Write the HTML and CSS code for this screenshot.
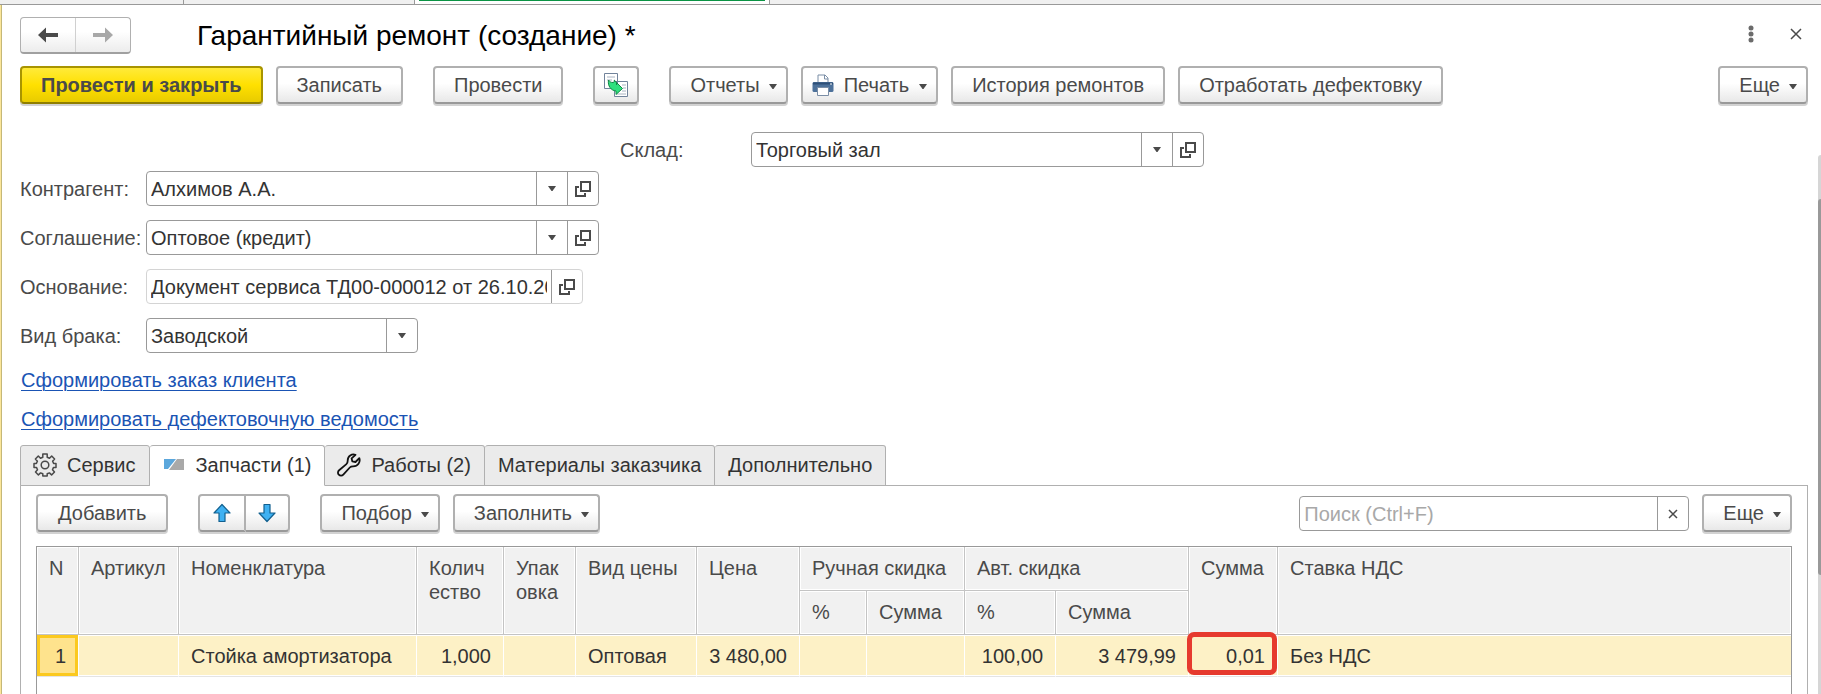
FILE: index.html
```html
<!DOCTYPE html>
<html lang="ru">
<head>
<meta charset="utf-8">
<title>Гарантийный ремонт (создание) *</title>
<link rel="stylesheet" href="styles.css">
</head>
<body>
<svg class="defs" aria-hidden="true">
  <symbol id="caret" viewBox="0 0 8 5"><path d="M0 0h8L4.500 5h-1z" fill="#4a4a4a"/></symbol>
  <symbol id="open" viewBox="0 0 16 16"><path d="M6 1h9v9H6zM4 6H1v9h9v-3" fill="none" stroke="#4a4a4a" stroke-width="2"/></symbol>
  <symbol id="arrow" viewBox="0 0 22 16"><path d="M1 8 9 0.500V6H21v4H9v5.500z"/></symbol>
  <symbol id="up" viewBox="0 0 18 20"><path d="M9 1.500 17 10H12v8.500H6V10H1z" fill="#3fb1f2" stroke="#12608f" stroke-width="1.200" stroke-linejoin="round"/></symbol>
</svg>
<div class="window-tabs"><span class="wtab first"></span><span class="wtab second"></span><span class="wtab current"></span></div>
<main class="form">
  <header class="title-row">
    <div class="nav">
      <button type="button" aria-label="Назад"><svg class="nav-arrow"><use href="#arrow"/></svg></button>
      <button type="button" aria-label="Вперед"><svg class="nav-arrow forward"><use href="#arrow"/></svg></button>
    </div>
    <h1>Гарантийный ремонт (создание) *</h1>
    <button type="button" class="plain" aria-label="Меню"><svg width="6" height="18"><g fill="#6b6b6b"><circle cx="3" cy="3" r="2.500"/><circle cx="3" cy="9" r="2.500"/><circle cx="3" cy="15" r="2.500"/></g></svg></button>
    <button type="button" class="plain" aria-label="Закрыть"><svg width="12" height="12"><path d="M1 1l10 10M11 1 1 11" stroke="#4a4a4a" stroke-width="1.500"/></svg></button>
  </header>

  <div class="commands">
    <button type="button" class="btn primary">Провести и закрыть</button>
    <button type="button" class="btn">Записать</button>
    <button type="button" class="btn spaced">Провести</button>
    <button type="button" class="btn spaced icon-only" aria-label="Создать на основании">
      <svg width="26" height="26" viewBox="0 0 26 26"><path d="M1.500 1.500h13v15h-13zM11.500 9.500h13v15h-13z" fill="#fff" stroke="#71839b"/><path d="M4 5h8M4 8h5M19 13h4M20 16h3M19 19h4M14 22h9" stroke="#a9b4c2"/><path d="M5.500 8c1.500 2 2.500 2.500 4.500 2.500 2-.5 1.500-2 1-2.500 2 1 3 3 2.500 5V10.500L19.500 16.500l-6.500 6v-3.500C8 18.500 4.500 14 5.500 8z" fill="#2fe07e" stroke="#118746" stroke-linejoin="round"/></svg>
    </button>
    <button type="button" class="btn spaced menu">Отчеты<svg class="caret"><use href="#caret"/></svg></button>
    <button type="button" class="btn menu print"><svg width="22" height="22" viewBox="0 0 22 22"><path d="M6 9V1h7l3 3v5" fill="#fff" stroke="#7b8ea6"/><path d="M12.500 1v4H16" fill="none" stroke="#7b8ea6"/><rect x="0.500" y="8" width="21" height="10" rx="1.500" fill="#4d719a"/><path d="M1 9.500h20" stroke="#2f5078" stroke-width="2"/><path d="M18 10h2" stroke="#fff"/><path d="M5.500 13.500h11v8h-11z" fill="#fff" stroke="#7b8ea6"/></svg>Печать<svg class="caret"><use href="#caret"/></svg></button>
    <button type="button" class="btn">История ремонтов</button>
    <button type="button" class="btn">Отработать дефектовку</button>
    <button type="button" class="btn menu push">Еще<svg class="caret"><use href="#caret"/></svg></button>
  </div>

  <div class="fields">
    <div class="column left">
      <div class="field"><label for="partner">Контрагент:</label><div class="combo wide"><input id="partner" value="Алхимов А.А."><button type="button" aria-label="Выбрать"><svg class="drop"><use href="#caret"/></svg></button><button type="button" aria-label="Открыть"><svg class="open"><use href="#open"/></svg></button></div></div>
      <div class="field"><label for="terms">Соглашение:</label><div class="combo wide"><input id="terms" value="Оптовое (кредит)"><button type="button" aria-label="Выбрать"><svg class="drop"><use href="#caret"/></svg></button><button type="button" aria-label="Открыть"><svg class="open"><use href="#open"/></svg></button></div></div>
      <div class="field"><label for="basis">Основание:</label><div class="combo readonly"><input id="basis" readonly value="Документ сервиса ТД00-000012 от 26.10.2020"><button type="button" aria-label="Открыть"><svg class="open"><use href="#open"/></svg></button></div></div>
      <div class="field"><label for="defect">Вид брака:</label><div class="combo short"><input id="defect" value="Заводской"><button type="button" aria-label="Выбрать"><svg class="drop"><use href="#caret"/></svg></button></div></div>
    </div>
    <div class="column right">
      <div class="field"><label for="store">Склад:</label><div class="combo wide"><input id="store" value="Торговый зал"><button type="button" aria-label="Выбрать"><svg class="drop"><use href="#caret"/></svg></button><button type="button" aria-label="Открыть"><svg class="open"><use href="#open"/></svg></button></div></div>
    </div>
  </div>

  <nav class="links">
    <a href="#order">Сформировать заказ клиента</a>
    <a href="#defects">Сформировать дефектовочную ведомость</a>
  </nav>

  <div class="tabs" role="tablist">
    <button type="button" role="tab" class="tab with-icon"><svg width="24" height="24" viewBox="0 0 24 24" fill="none" stroke="#4a4a4a" stroke-width="1.500" stroke-linejoin="round"><circle cx="12" cy="12" r="3.800"/><path d="M9.800 1h4.400v3.200l2.300 1L18.700 3l2.900 3-2 2.300 1 2.100H23v4.200h-2.600l-.9 2.200 2 2.100-2.900 3-2.200-2-2.200.9V23H9.800v-2.200l-2.200-.9-2.200 2-2.900-3 2-2.100-.9-2.200H1v-4.200h2.400l1-2.100-2-2.300 2.900-3 2.200 2.200 2.300-1z"/></svg>Сервис</button>
    <button type="button" role="tab" class="tab with-icon selected" aria-selected="true"><svg width="24" height="24" viewBox="0 0 24 24"><path d="M2 6h12L6 16H2z" fill="#5ba7dc"/><path d="M15 6h7v11H7z" fill="#a9a9a9"/></svg>Запчасти (1)</button>
    <button type="button" role="tab" class="tab with-icon"><svg width="24" height="24" viewBox="0 0 24 24" fill="none" stroke="#111" stroke-width="1.800" stroke-linejoin="round"><path d="M18.500 1.800c-3.500-1.300-8 1-7.800 6 0 1.600-.2 2.400-1.300 3.300l-7.300 6.200c-1.500 1.300-1.400 3.200-.3 4.400 1.200 1.300 3.300 1.300 4.500 0l6.500-7.200c.9-1 1.700-1.200 3.200-1.200 4.900.1 7.700-4.300 6.300-8.200L18.500 9l-3.200-.6-.7-3z"/></svg>Работы (2)</button>
    <button type="button" role="tab" class="tab">Материалы заказчика</button>
    <button type="button" role="tab" class="tab">Дополнительно</button>
  </div>

  <section class="panel">
    <div class="commands inner">
      <button type="button" class="btn">Добавить</button>
      <div class="pair spaced">
        <button type="button" class="btn" aria-label="Вверх"><svg width="18" height="20"><use href="#up"/></svg></button>
        <button type="button" class="btn" aria-label="Вниз"><svg class="flip" width="18" height="20"><use href="#up"/></svg></button>
      </div>
      <button type="button" class="btn spaced menu">Подбор<svg class="caret"><use href="#caret"/></svg></button>
      <button type="button" class="btn menu">Заполнить<svg class="caret"><use href="#caret"/></svg></button>
      <div class="combo search push"><input aria-label="Поиск" placeholder="Поиск (Ctrl+F)"><button type="button" aria-label="Очистить"><svg width="10" height="10"><path d="M1 1l8 8M9 1 1 9" stroke="#4a4a4a" stroke-width="1.500"/></svg></button></div>
      <button type="button" class="btn menu">Еще<svg class="caret"><use href="#caret"/></svg></button>
    </div>
    <div class="grid">
      <table>
        <colgroup><col class="c-n"><col class="c-art"><col class="c-name"><col class="c-qty"><col class="c-pack"><col class="c-kind"><col class="c-price"><col class="c-mp"><col class="c-ms"><col class="c-ap"><col class="c-as"><col class="c-sum"><col></colgroup>
        <thead>
          <tr><th rowspan="2">N</th><th rowspan="2">Артикул</th><th rowspan="2">Номенклатура</th><th rowspan="2">Колич<br>ество</th><th rowspan="2">Упак<br>овка</th><th rowspan="2">Вид цены</th><th rowspan="2">Цена</th><th colspan="2">Ручная скидка</th><th colspan="2">Авт. скидка</th><th rowspan="2">Сумма</th><th rowspan="2">Ставка НДС</th></tr>
          <tr><th>%</th><th>Сумма</th><th>%</th><th>Сумма</th></tr>
        </thead>
        <tbody>
          <tr><td class="num active">1</td><td></td><td>Стойка амортизатора</td><td class="num">1,000</td><td></td><td>Оптовая</td><td class="num">3 480,00</td><td></td><td></td><td class="num">100,00</td><td class="num">3 479,99</td><td class="num marked">0,01</td><td>Без НДС</td></tr>
        </tbody>
      </table>
    </div>
  </section>
</main>
<div class="scrollbar"><div class="thumb"></div></div>
</body>
</html>
```
FILE: styles.css
```css
* { box-sizing: border-box; }
body {
  margin: 0;
  height: 100vh;
  overflow: hidden;
  display: flex;
  flex-direction: column;
  background: #fff;
  color: #333;
  font: 20px/24px "Liberation Sans", Arial, sans-serif;
}
button, input { font: inherit; color: inherit; }
button { margin: 0; padding: 0; cursor: pointer; }
svg { display: block; flex: none; }
.defs { position: absolute; width: 0; height: 0; }

.window-tabs { display: flex; flex: none; height: 5px; background: #f0f0f0; border-bottom: 1px solid #999; }
.wtab { border-right: 1px solid #999; }
.first { width: 184px; }
.second { width: 231px; }
.current { width: 355px; padding: 0 4px; background: #fff; }
.current::before { content: ""; display: block; height: 1px; background: #0b9444; }

.form {
  flex: 1;
  min-height: 0;
  display: flex;
  flex-direction: column;
  padding: 12px 13px 0 19px;
  border-left: 1px solid #fbe69a;
  box-shadow: inset 1px 0 #c5b878;
}

.title-row { display: flex; align-items: center; flex: none; height: 37px; }
.nav { display: flex; height: 37px; border: 1px solid #b0b0b0; border-bottom: 2px solid #a0a0a0; border-radius: 4px; background: linear-gradient(#fff 40%, #ececec); }
.nav button { width: 54px; border: 0; background: none; display: grid; place-items: center; }
.nav button + button { width: 55px; border-left: 1px solid #d0d0d0; }
.nav-arrow { width: 22px; height: 16px; fill: #4a4a4a; }
.forward { fill: #a8a8a8; transform: scaleX(-1); }
h1 { flex: 1; margin: 0 0 0 66px; color: #000; font-size: 28px; line-height: 32px; font-weight: 400; }
.plain { width: 24px; height: 24px; margin: 0 0 4px 21px; border: 0; background: none; display: grid; place-items: center; }

.commands { display: flex; flex: none; gap: 13px; margin-top: 12px; }
.btn {
  height: 38px;
  padding: 0 19px;
  display: flex;
  align-items: center;
  justify-content: center;
  white-space: nowrap;
  border: 2px solid #b0b0b0;
  border-bottom-color: #999;
  border-radius: 4px;
  background: linear-gradient(#fff 45%, #e8e8e8);
  box-shadow: 0 2px 0 #d2d2d2;
  color: #4a4a4a;
}
.primary { border-color: #a89400; border-bottom-color: #8f7e00; background: linear-gradient(#ffea3a, #ffe000 50%, #e8cb00); font-weight: 700; }
.spaced { margin-left: 17px; }
.push { margin-left: auto; }
.icon-only { width: 46px; padding: 0; }
.menu { padding-right: 9px; gap: 9px; }
.print { padding-left: 9px; gap: 10px; }
.caret { width: 8px; height: 5px; margin-top: 3px; }
.drop { width: 8px; height: 5px; }

.fields { display: grid; grid-template-columns: 579px auto; justify-content: start; gap: 21px; margin-top: 28px; }
.left { padding-top: 39px; }
.column { display: flex; flex-direction: column; gap: 14px; }
.field { display: flex; align-items: center; color: #4a4a4a; }
.left label { width: 126px; }
.right label { width: 131px; }
.combo { display: flex; height: 35px; border: 1px solid #999; border-radius: 4px; background: #fff; color: #333; }
.combo input { flex: 1; min-width: 0; padding: 0 4px; border: 0; background: none; outline: none; }
.combo input::placeholder { color: #a8a8a8; opacity: 1; }
.combo button { width: 31px; border: 0; border-left: 1px solid #999; background: none; display: grid; place-items: center; }
.wide { width: 453px; }
.readonly { width: 437px; border-color: #d4d4d4; }
.short { width: 272px; }
.open { width: 16px; height: 16px; }

.links { display: flex; flex-direction: column; align-items: flex-start; gap: 15px; margin: 15px 0 0 1px; }
.links a { color: #1a54b4; text-decoration-thickness: 1px; text-underline-offset: 3px; }

.tabs { display: flex; flex: none; margin-top: 14px; position: relative; z-index: 1; }
.tab { height: 41px; padding: 0 13px 2px; display: flex; align-items: center; white-space: nowrap; border: 1px solid #b0b0b0; border-left-width: 0; border-radius: 3px 3px 0 0; background: #ebebeb; }
.tab:first-child { border-left-width: 1px; }
.with-icon { padding-left: 12px; gap: 10px; }
.selected { background: #fff; border-bottom-color: #fff; }

.panel { flex: 1; min-height: 0; display: flex; flex-direction: column; margin-top: -1px; padding: 0 15px; border: 1px solid #b0b0b0; border-bottom: 0; }
.inner { margin-top: 8px; }
.inner > .btn:first-child { padding: 0 20px; }
.pair { display: flex; }
.pair .btn { width: 48px; padding: 0; border-radius: 4px 0 0 4px; }
.pair .btn + .btn { width: 44px; border-left: 0; border-radius: 0 4px 4px 0; }
.flip { transform: scaleY(-1); }
.search { width: 390px; margin-top: 2px; }

.grid { flex: 1; margin-top: 14px; border: 1px solid #999; border-bottom: 0; }
table { width: 100%; table-layout: fixed; border-collapse: separate; border-spacing: 0; }
th, td { text-align: left; font-weight: 400; white-space: nowrap; }
th { height: 44px; padding: 9px 12px 0; vertical-align: top; background: #f1f1f1; color: #4a4a4a; border-right: 1px solid #c4c4c4; border-bottom: 1px solid #c4c4c4; box-shadow: inset 0 0 0 1px #fff; }
td { height: 42px; padding: 1px 12px 0; background: #fdf1c6; border-right: 1px solid #fff; border-bottom: 1px solid #e4e4e4; box-shadow: inset 0 1px #fff, inset 0 -1px #fff; }
thead tr:first-child th:last-child, td:last-child { border-right: 0; }
.num { text-align: right; }
.active { background: #fee38d; box-shadow: inset 0 0 0 3px #fbc91f; }
.marked { position: relative; }
.marked::after { content: ""; position: absolute; inset: -3px 0 1px -2px; border: 5px solid #e63a2e; border-radius: 7px; }
.c-n { width: 42px; }
.c-art { width: 100px; }
.c-name { width: 238px; }
.c-qty { width: 87px; }
.c-pack { width: 72px; }
.c-kind { width: 121px; }
.c-price { width: 103px; }
.c-mp { width: 67px; }
.c-ms { width: 98px; }
.c-ap { width: 91px; }
.c-as { width: 133px; }
.c-sum { width: 89px; }

.scrollbar { position: absolute; top: 155px; right: 0; bottom: 0; width: 3px; padding-top: 44px; background: #d6d6d6; border-radius: 3px 0 0 0; }
.thumb { height: 76%; background: #999; border-radius: 3px 0 0 3px; }
```
